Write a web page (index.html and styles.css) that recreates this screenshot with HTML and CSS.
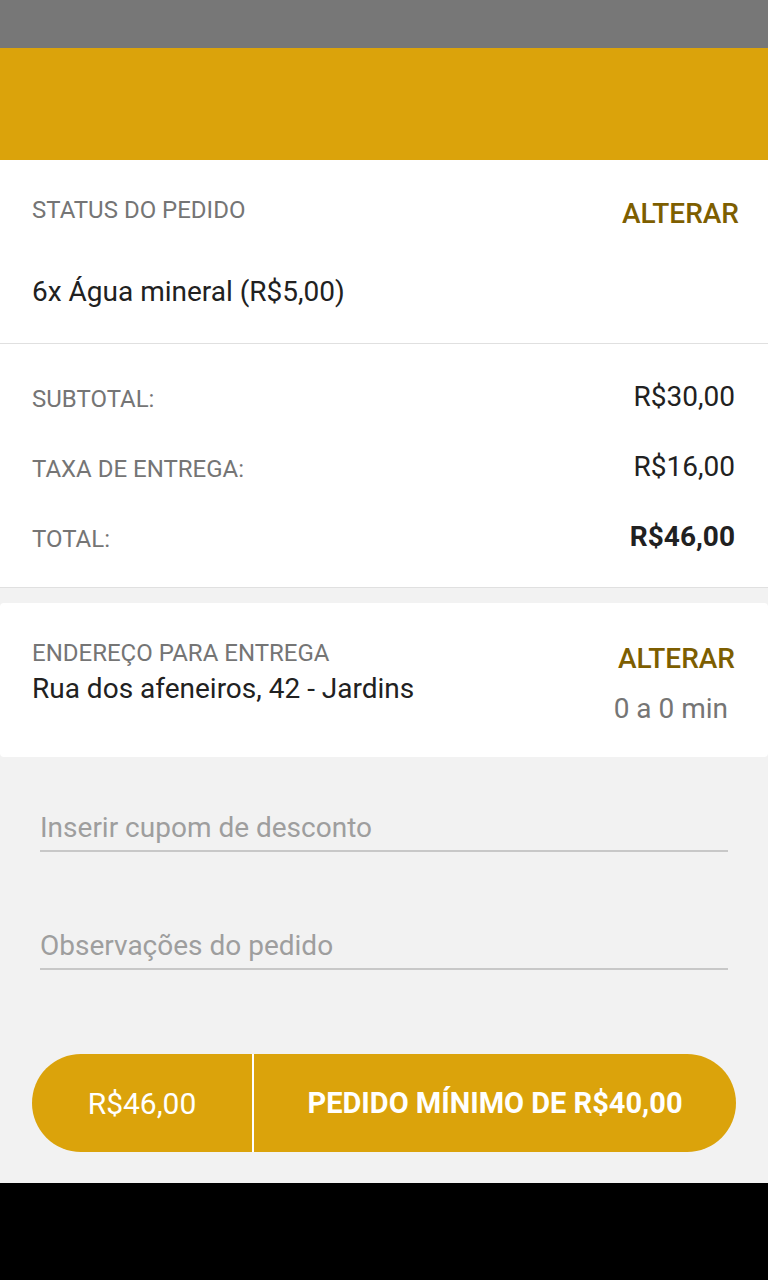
FILE: index.html
```html
<!DOCTYPE html>
<html lang="pt-BR">
<head>
    <meta charset="UTF-8">
    <meta name="viewport" content="width=device-width, initial-scale=1.0">
    <title>Carrinho</title>
    <link rel="stylesheet" href="styles.css">
</head>
<body>
    <div class="status-bar"></div>
    <div class="toolbar"></div>

    <section class="order">
        <div class="order-head">
            <span class="label">STATUS DO PEDIDO</span>
            <a class="change">ALTERAR</a>
        </div>
        <p class="item">6x Água mineral (R$5,00)</p>
    </section>

    <section class="totals">
        <div class="row">
            <span class="label">SUBTOTAL:</span>
            <span class="value">R$30,00</span>
        </div>
        <div class="row">
            <span class="label">TAXA DE ENTREGA:</span>
            <span class="value">R$16,00</span>
        </div>
        <div class="row">
            <span class="label">TOTAL:</span>
            <span class="value strong">R$46,00</span>
        </div>
    </section>

    <section class="address">
        <div class="address-info">
            <span class="label">ENDEREÇO PARA ENTREGA</span>
            <span class="street">Rua dos afeneiros, 42 - Jardins</span>
        </div>
        <div class="address-side">
            <a class="change">ALTERAR</a>
            <span class="eta">0 a 0 min</span>
        </div>
    </section>

    <div class="fields">
        <input class="field" type="text" placeholder="Inserir cupom de desconto">
        <input class="field" type="text" placeholder="Observações do pedido">
    </div>

    <div class="checkout">
        <button class="pay">
            <span class="pay-total">R$46,00</span>
            <span class="pay-action">PEDIDO MÍNIMO DE R$40,00</span>
        </button>
    </div>

    <div class="nav-bar"></div>
</body>
</html>
```

FILE: styles.css
```css
body {
    font-family: Roboto, "Noto Sans", sans-serif;
    background-color: #f2f2f2;
    color: #212121;
    margin: 0;
    padding: 0;
    width: 768px;
    height: 1280px;
    display: flex;
    flex-direction: column;
}
.status-bar {
    height: 48px;
    flex-shrink: 0;
    background-color: #777777;
}
.toolbar {
    height: 112px;
    flex-shrink: 0;
    background-color: #dba30b;
}
.label {
    font-size: 24px;
    color: #757575;
    line-height: 28px;
}
.change {
    font-size: 28px;
    font-weight: 500;
    color: #7d5e00;
    line-height: 32px;
}
.order {
    flex-shrink: 0;
    background-color: #fff;
    height: 184px;
    padding: 36px 29px 0 32px;
    box-sizing: border-box;
    border-bottom: 1px solid #e0e0e0;
}
.order-head {
    display: flex;
    justify-content: space-between;
    align-items: flex-start;
}
.order-head .change {
    margin-top: 2px;
}
.item {
    margin: 46px 0 0;
    font-size: 28px;
    line-height: 32px;
}
.totals {
    flex-shrink: 0;
    background-color: #fff;
    height: 244px;
    padding: 37px 33px 0 32px;
    box-sizing: border-box;
    border-bottom: 1px solid #e0e0e0;
    display: flex;
    flex-direction: column;
    gap: 38px;
}
.row {
    display: flex;
    justify-content: space-between;
    align-items: flex-start;
    height: 32px;
}
.row .label {
    margin-top: 4px;
}
.value {
    font-size: 28px;
    line-height: 32px;
}
.value.strong {
    font-weight: 700;
}
.address {
    flex-shrink: 0;
    margin-top: 15px;
    background-color: #fff;
    border-radius: 4px;
    height: 154px;
    padding: 36px 33px 0 32px;
    box-sizing: border-box;
    display: flex;
    justify-content: space-between;
}
.address-info {
    display: flex;
    flex-direction: column;
    gap: 6px;
}
.street {
    font-size: 28px;
    line-height: 32px;
}
.address-side {
    display: flex;
    flex-direction: column;
    align-items: flex-end;
    gap: 18px;
}
.address-side .change {
    margin-top: 4px;
}
.eta {
    font-size: 28px;
    color: #757575;
    line-height: 32px;
    margin-right: 7px;
}
.fields {
    flex-shrink: 0;
    display: flex;
    flex-direction: column;
    gap: 77px;
    padding: 54px 40px 0;
}
.field {
    font-family: inherit;
    font-size: 28px;
    line-height: 32px;
    color: #212121;
    background: transparent;
    border: none;
    border-bottom: 2px solid #c8c8c8;
    padding: 0 0 7px;
    margin: 0;
    height: 41px;
    box-sizing: border-box;
    outline: none;
}
.field::placeholder {
    color: #9e9e9e;
}
.checkout {
    flex-shrink: 0;
    padding: 84px 32px 0;
    height: 213px;
    box-sizing: border-box;
}
.pay {
    display: flex;
    width: 100%;
    height: 98px;
    padding: 0;
    border: none;
    border-radius: 49px;
    background-color: #dba30b;
    color: #fff;
    font-family: inherit;
    overflow: hidden;
}
.pay-total {
    width: 220px;
    height: 100%;
    display: flex;
    align-items: center;
    justify-content: center;
    font-size: 30px;
    border-right: 2px solid #fff;
}
.pay-action {
    flex: 1;
    height: 100%;
    display: flex;
    align-items: center;
    justify-content: center;
    font-size: 29px;
    font-weight: 700;
}
.nav-bar {
    flex: 1;
    background-color: #000;
}
```
